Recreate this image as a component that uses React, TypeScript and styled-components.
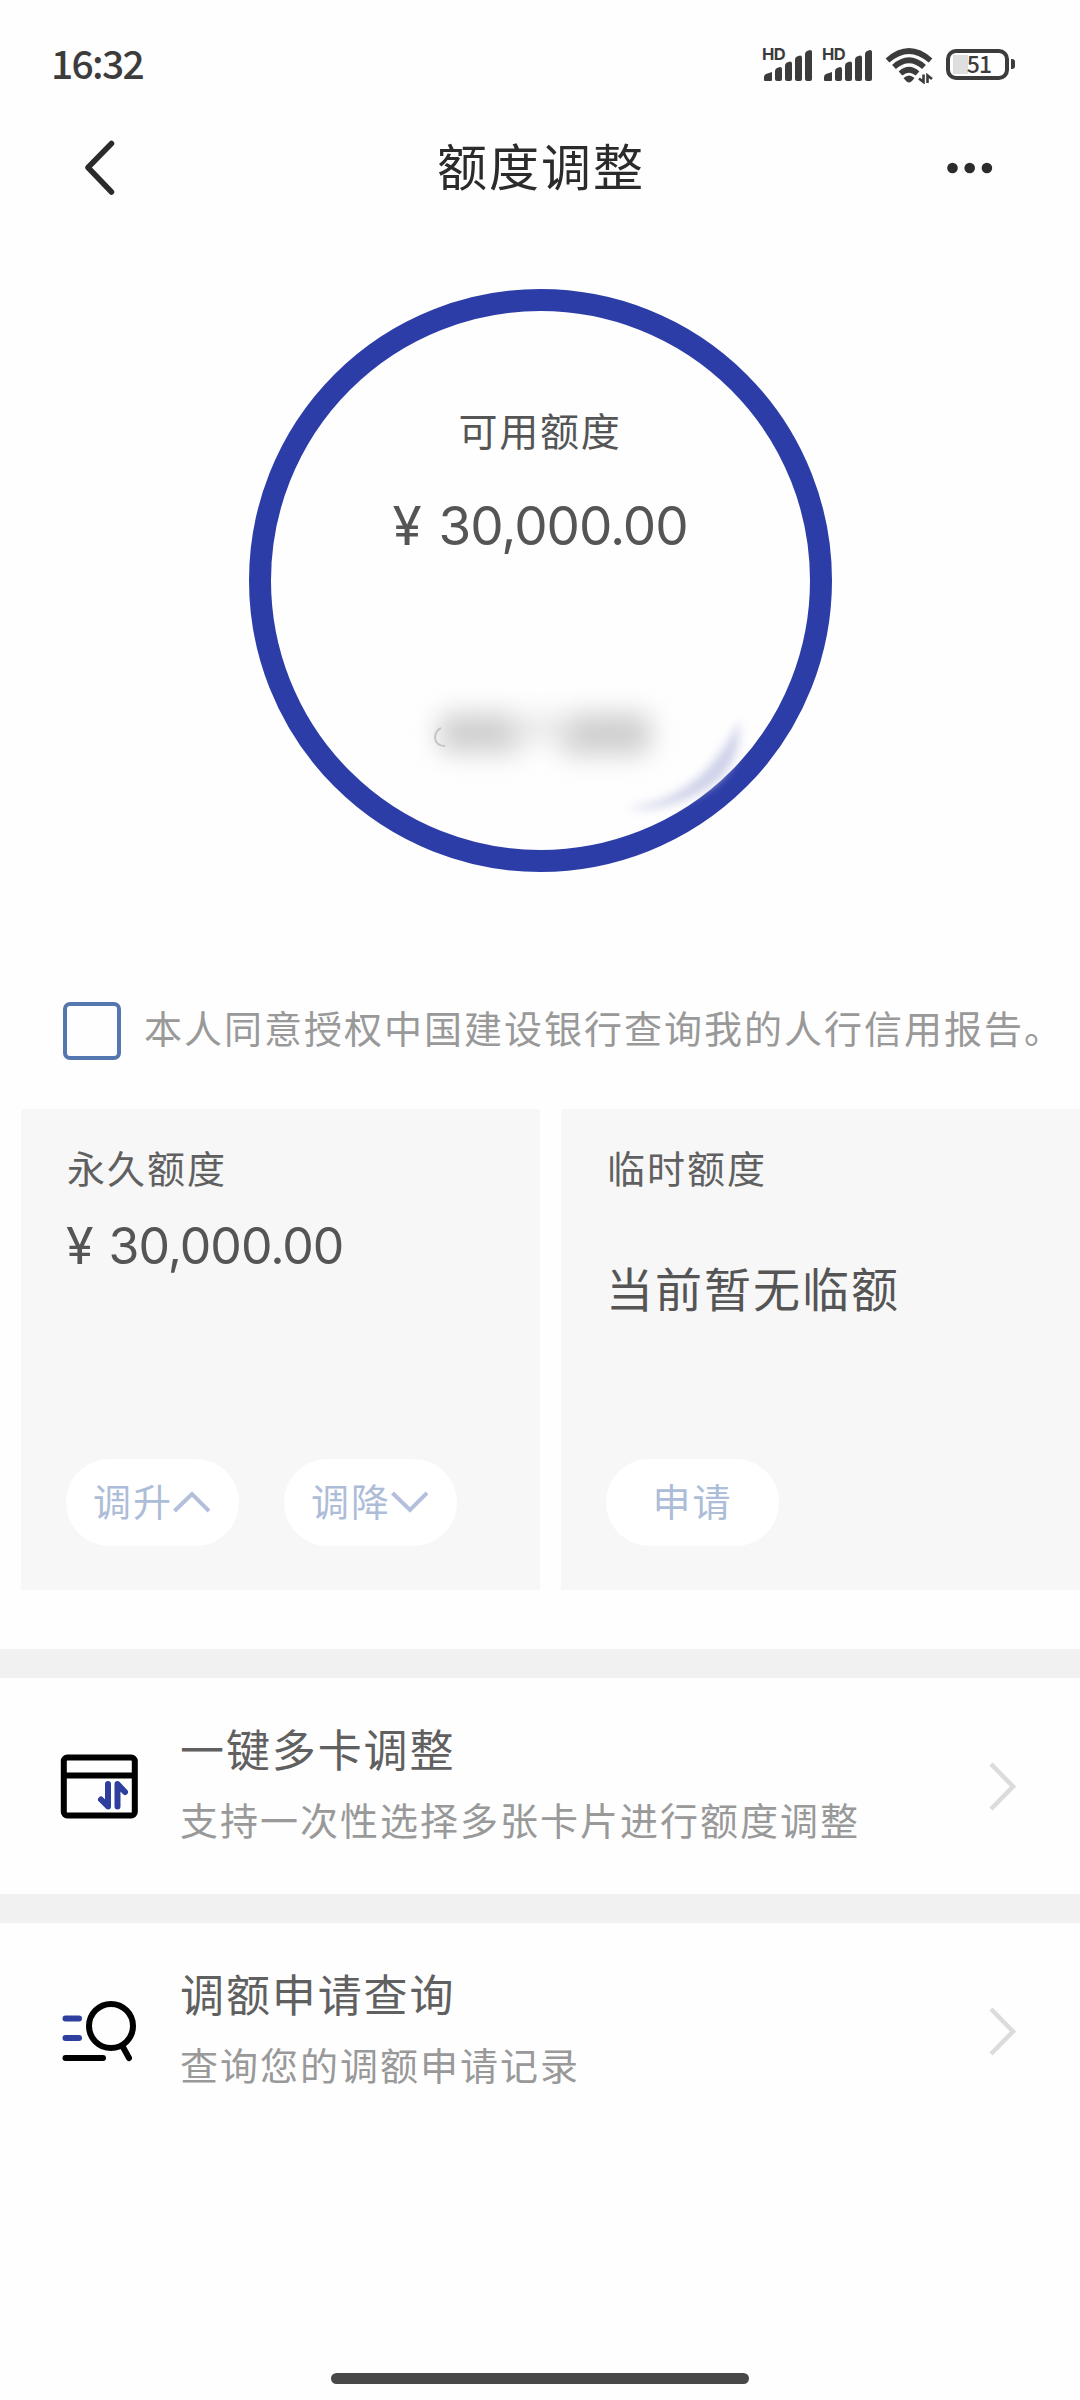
import React from "react";
import styled, { createGlobalStyle } from "styled-components";

const cjk = `"Noto Sans CJK SC", sans-serif`;
const latin = `Inter, "Noto Sans CJK SC", sans-serif`;

const GlobalStyle = createGlobalStyle`
  * { box-sizing: border-box; }
  body { margin: 0; background: #fefefe; }
  button { border: 0; padding: 0; background: none; font: inherit; color: inherit; }
`;

const Screen = styled.div`
  width: 1080px;
  height: 2400px;
  display: flex;
  flex-direction: column;
  overflow: hidden;
  background: #fefefe;
  color: #555;
  font-family: ${cjk};
`;

const StatusBar = styled.header`
  height: 110px;
  padding: 18px 65px 0 51px;
  display: flex;
  align-items: center;
  justify-content: space-between;
  color: #3c3c3c;
`;

const Time = styled.span`
  font-size: 39px;
  line-height: 60px;
  padding-bottom: 4px;
  font-weight: 500;
  letter-spacing: -1.7px;
`;

const StatusIcons = styled.div`
  display: flex;
  align-items: center;
`;

const SignalBox = styled.div`
  position: relative;
  width: 60px;
  height: 34px;
`;

const HdTag = styled.span`
  position: absolute;
  left: 0;
  top: 0;
  font: 700 16.5px/15px ${latin};
  letter-spacing: -0.5px;
`;

const WifiBox = styled.div`
  width: 48px;
  height: 34px;
  margin: 0 13px 0 3px;
`;

const BatteryBody = styled.div`
  width: 63px;
  height: 31px;
  padding: 0 14px 3px 3px;
  border: 4px solid #3c3c3c;
  border-radius: 10px;
  display: flex;
  align-items: center;
  justify-content: flex-end;
  background: linear-gradient(#dedede, #dedede) 3px 2px / 15px 19px no-repeat;
  font: 500 23px/24px ${cjk};
  letter-spacing: -1px;
`;

const BatteryCap = styled.div`
  width: 4px;
  height: 10px;
  margin-left: 2px;
  border-radius: 0 3px 3px 0;
  background: #3c3c3c;
`;

const NavBar = styled.nav`
  height: 114px;
  display: grid;
  grid-template-columns: 200px 1fr 200px;
  align-items: center;
`;

const NavButton = styled.button<{ $side: "left" | "right" }>`
  height: 60px;
  display: flex;
  align-items: center;
  justify-content: ${(p) => (p.$side === "left" ? "flex-start" : "flex-end")};
  padding: ${(p) => (p.$side === "left" ? "0 0 0 81px" : "2px 86px 0 0")};
`;

const Title = styled.h1`
  margin: 0;
  padding-bottom: 6px;
  text-align: center;
  font-size: 50px;
  line-height: 72px;
  font-weight: 400;
  letter-spacing: 2px;
  text-indent: 2px;
  color: #2b2b2b;
`;

const GaugeSection = styled.section`
  height: 767px;
  padding-top: 65px;
  display: flex;
  justify-content: center;
`;

const Gauge = styled.div`
  position: relative;
  width: 583px;
  height: 583px;
  border: 22px solid #2c3da8;
  border-radius: 50%;
  padding-top: 89px;
  display: flex;
  flex-direction: column;
  align-items: center;
  gap: 32px;
`;

const GaugeLabel = styled.div`
  font-size: 39px;
  line-height: 58px;
  letter-spacing: 1.7px;
`;

const Amount = styled.div<{ $size: number; $gap: number }>`
  display: flex;
  gap: ${(p) => p.$gap}px;
  font-family: ${latin};
  font-size: ${(p) => p.$size}px;
  line-height: 72px;
  letter-spacing: -0.02em;
  color: #555;
`;

const Smudge = styled.svg`
  position: absolute;
  left: 130px;
  top: 370px;
`;

const Agreement = styled.label`
  height: 118px;
  padding: 11px 0 0 63px;
  display: flex;
  align-items: flex-start;
  gap: 23px;
`;

const CheckBox = styled.span`
  flex: none;
  width: 58px;
  height: 58px;
  border: 4px solid #5577b0;
  border-radius: 7px;
`;

const AgreementText = styled.span`
  margin-top: -3px;
  font-size: 38px;
  line-height: 56px;
  letter-spacing: 2px;
  white-space: nowrap;
  color: #999;
`;

const Cards = styled.section`
  height: 540px;
  padding-left: 21px;
  display: grid;
  grid-template-columns: 519px 519px;
  gap: 21px;
  align-items: start;
`;

const Card = styled.article`
  height: 481px;
  padding: 30px 0 44px 45px;
  display: flex;
  flex-direction: column;
  background: #f7f7f7;
`;

const CardLabel = styled.div`
  margin-left: 1px;
  font-size: 38px;
  line-height: 56px;
  letter-spacing: 2px;
  color: #606060;
`;

const CardAmount = styled(Amount)`
  margin-top: 15px;
`;

const CardNote = styled.div`
  margin-top: 57px;
  font-size: 47px;
  line-height: 70px;
  letter-spacing: 2px;
  white-space: nowrap;
`;

const Actions = styled.div`
  margin-top: auto;
  display: flex;
  gap: 45px;
`;

const Pill = styled.button`
  width: 173px;
  height: 87px;
  padding-bottom: 5px;
  border-radius: 44px;
  display: flex;
  align-items: center;
  justify-content: center;
  background: #fff;
  color: #adbdd8;
  font-size: 38px;
  line-height: 56px;
  letter-spacing: 1.9px;

  svg {
    margin: 4px 2px 0 0;
  }
`;

const Band = styled.div`
  flex: none;
  height: 29px;
  background: #f1f1f1;
`;

const Row = styled.a`
  height: 216px;
  padding: 0 64px 0 60px;
  display: flex;
  align-items: center;
`;

const RowText = styled.div`
  margin-left: 39px;
  padding-bottom: 10px;
  flex: 1;
  display: flex;
  flex-direction: column;
  gap: 11px;
`;

const RowTitle = styled.div`
  font-size: 44px;
  line-height: 64px;
  letter-spacing: 1.9px;
  color: #606060;
`;

const RowNote = styled.div`
  font-size: 38px;
  line-height: 56px;
  letter-spacing: 2px;
  color: #999;
`;

const Footer = styled.footer`
  margin-top: auto;
  height: 27px;
  display: flex;
  justify-content: center;
  align-items: flex-start;
`;

const HomeIndicator = styled.div`
  width: 418px;
  height: 11px;
  border-radius: 6px;
  background: #484848;
`;

const Signal = () => (
  <SignalBox>
    <HdTag>HD</HdTag>
    <svg width="60" height="34" fill="#3c3c3c">
      <path d="M2 33V30Q2 28 4 27L10 25V33Q10 34 9 34H3Q2 34 2 33Z" />
      {[[13, 20], [23, 14.5], [33, 8.5], [43, 3]].map(([x, y]) => (
        <path key={x} d={`M${x} ${y + 4}Q${x} ${y + 2} ${x + 2} ${y + 1}L${x + 5} ${y}Q${x + 7} ${y} ${x + 7} ${y + 2}V32Q${x + 7} 34 ${x + 5} 34H${x + 2}Q${x} 34 ${x} 32Z`} />
      ))}
    </svg>
  </SignalBox>
);

const Wifi = () => (
  <WifiBox>
    <svg width="50" height="37" fill="none" stroke="#3c3c3c" strokeWidth="5.6">
      <path d="M2.500 13.500Q24 -5.500 45.500 13.500" />
      <path d="M9 20Q24 6.500 39 20" />
      <path d="M15.500 26.500Q24 19 32.500 26.500" />
      <path d="M18.500 31Q24 26 29.500 31Q26 35.500 24 35.500Q22 35.500 18.500 31Z" fill="#3c3c3c" stroke="none" />
      <path d="M38.500 27.500V35L34 31.500M42.500 36V28.500L47 32" strokeWidth="2.600" />
    </svg>
  </WifiBox>
);

const Caret = ({ down = false }: { down?: boolean }) => (
  <svg width="37" height="24" fill="none" stroke="#b3bfdc" strokeWidth="4">
    <path d={down ? "M1.500 3L19 20L36 3" : "M1.500 21L19 4L36 21"} />
  </svg>
);

const Chevron = () => (
  <svg width="27" height="50" fill="none" stroke="#dcdcdc" strokeWidth="4.6">
    <path d="M2 3L24 25.500L2 48" />
  </svg>
);

const CardIcon = () => (
  <svg width="81" height="66" fill="none" stroke="#000" strokeWidth="6">
    <rect x="3.800" y="4.500" width="71" height="58" rx="3.500" />
    <path d="M4 22.500H75" />
    <path d="M48 31V53.500L41 46.500M57.500 53.500V31L65 39" stroke="#2e3f9f" strokeLinecap="round" strokeLinejoin="round" />
  </svg>
);

const QueryIcon = () => (
  <svg width="81" height="66" fill="none" stroke="#000" strokeWidth="6" strokeLinecap="round">
    <circle cx="51" cy="28" r="22" />
    <path d="M63.500 50L69 60M5.500 60H43" />
    <path d="M5.500 20.500H19M5.500 40H19" stroke="#2e3f9f" />
  </svg>
);

const rows = [
  { title: "一键多卡调整", note: "支持一次性选择多张卡片进行额度调整", Icon: CardIcon },
  { title: "调额申请查询", note: "查询您的调额申请记录", Icon: QueryIcon },
];

export default function App() {
  return (
    <Screen>
      <GlobalStyle />
      <StatusBar>
        <Time>16:32</Time>
        <StatusIcons>
          <Signal />
          <Signal />
          <Wifi />
          <BatteryBody>51</BatteryBody>
          <BatteryCap />
        </StatusIcons>
      </StatusBar>
      <NavBar>
        <NavButton $side="left" aria-label="返回">
          <svg width="34" height="56" fill="none" stroke="#2b2b2b" strokeWidth="5.500" strokeLinecap="round" strokeLinejoin="round">
            <path d="M30.500 4.500L7 28.500L30.500 53" />
          </svg>
        </NavButton>
        <Title>额度调整</Title>
        <NavButton $side="right" aria-label="更多">
          <svg width="48" height="12" fill="#2b2b2b">
            <circle cx="6.500" cy="6" r="5.300" />
            <circle cx="23.700" cy="6" r="5.300" />
            <circle cx="40.900" cy="6" r="5.300" />
          </svg>
        </NavButton>
      </NavBar>
      <GaugeSection>
        <Gauge>
          <GaugeLabel>可用额度</GaugeLabel>
          <Amount $size={53} $gap={18}>
            <span>¥</span>
            <span>30,000.00</span>
          </Amount>
          <Smudge width="380" height="170" fill="none">
            <defs>
              <filter id="soft" x="-50%" y="-150%" width="200%" height="400%">
                <feGaussianBlur stdDeviation="13" />
              </filter>
              <filter id="glow" x="-50%" y="-50%" width="200%" height="200%">
                <feGaussianBlur stdDeviation="5" />
              </filter>
            </defs>
            <g filter="url(#soft)" fill="#cfcfcf">
              <rect x="38" y="32" width="84" height="40" rx="10" />
              <rect x="158" y="32" width="92" height="42" rx="12" />
              <rect x="110" y="34" width="60" height="26" fill="#e8e8e8" />
            </g>
            <path d="M40 47Q34 50 34 57Q35 65 44 65" stroke="#c4c4c4" strokeWidth="2" />
            <path d="M225 127Q300 120 338 40Q342 92 294 114Q255 132 225 127Z" fill="#ced1e9" filter="url(#glow)" />
          </Smudge>
        </Gauge>
      </GaugeSection>
      <Agreement>
        <CheckBox />
        <AgreementText>本人同意授权中国建设银行查询我的人行信用报告。</AgreementText>
      </Agreement>
      <Cards>
        <Card>
          <CardLabel>永久额度</CardLabel>
          <CardAmount $size={50} $gap={16}>
            <span>¥</span>
            <span>30,000.00</span>
          </CardAmount>
          <Actions>
            <Pill>调升<Caret /></Pill>
            <Pill>调降<Caret down /></Pill>
          </Actions>
        </Card>
        <Card>
          <CardLabel>临时额度</CardLabel>
          <CardNote>当前暂无临额</CardNote>
          <Actions>
            <Pill>申请</Pill>
          </Actions>
        </Card>
      </Cards>
      {rows.map(({ title, note, Icon }) => (
        <React.Fragment key={title}>
          <Band />
          <Row>
            <Icon />
            <RowText>
              <RowTitle>{title}</RowTitle>
              <RowNote>{note}</RowNote>
            </RowText>
            <Chevron />
          </Row>
        </React.Fragment>
      ))}
      <Footer>
        <HomeIndicator />
      </Footer>
    </Screen>
  );
}
